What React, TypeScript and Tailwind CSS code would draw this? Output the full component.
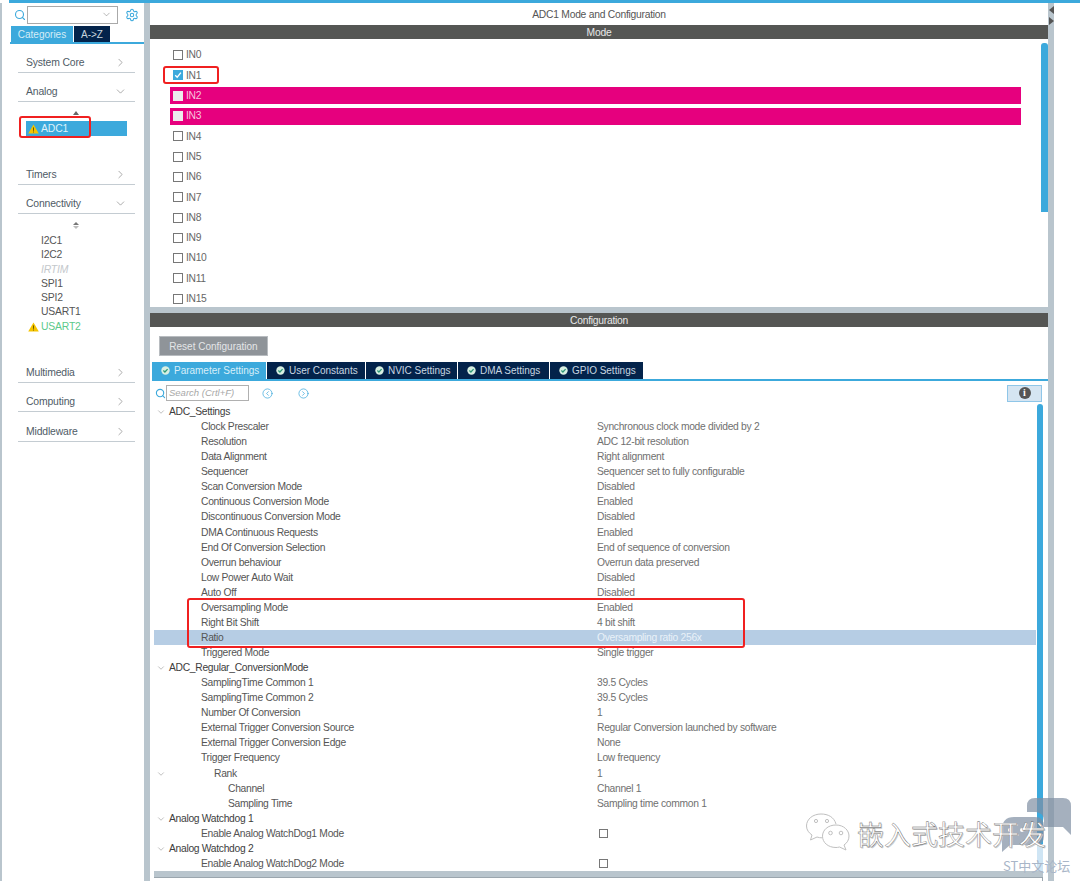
import { ChevronDown, ChevronRight, CircleChevronLeft, CircleChevronRight, Search, Settings } from "lucide-react";

const inputs = ["IN0", "IN1", "IN2", "IN3", "IN4", "IN5", "IN6", "IN7", "IN8", "IN9", "IN10", "IN11", "IN15"];

const tabs = [
  { label: "Parameter Settings", width: "w-[115px]", active: true },
  { label: "User Constants", width: "w-[99px]", active: false },
  { label: "NVIC Settings", width: "w-[92px]", active: false },
  { label: "DMA Settings", width: "w-[92px]", active: false },
  { label: "GPIO Settings", width: "w-[94px]", active: false },
];

type Row = { label: string; value?: string; level?: 0 | 1 | 2 | 3; arrow?: boolean; check?: boolean; selected?: boolean };

const rows: Row[] = [
  { label: "ADC_Settings", level: 0, arrow: true },
  { label: "Clock Prescaler", value: "Synchronous clock mode divided by 2" },
  { label: "Resolution", value: "ADC 12-bit resolution" },
  { label: "Data Alignment", value: "Right alignment" },
  { label: "Sequencer", value: "Sequencer set to fully configurable" },
  { label: "Scan Conversion Mode", value: "Disabled" },
  { label: "Continuous Conversion Mode", value: "Enabled" },
  { label: "Discontinuous Conversion Mode", value: "Disabled" },
  { label: "DMA Continuous Requests", value: "Enabled" },
  { label: "End Of Conversion Selection", value: "End of sequence of conversion" },
  { label: "Overrun behaviour", value: "Overrun data preserved" },
  { label: "Low Power Auto Wait", value: "Disabled" },
  { label: "Auto Off", value: "Disabled" },
  { label: "Oversampling Mode", value: "Enabled" },
  { label: "Right Bit Shift", value: "4 bit shift" },
  { label: "Ratio", value: "Oversampling ratio 256x", selected: true },
  { label: "Triggered Mode", value: "Single trigger" },
  { label: "ADC_Regular_ConversionMode", level: 0, arrow: true },
  { label: "SamplingTime Common 1", value: "39.5 Cycles" },
  { label: "SamplingTime Common 2", value: "39.5 Cycles" },
  { label: "Number Of Conversion", value: "1" },
  { label: "External Trigger Conversion Source", value: "Regular Conversion launched by software" },
  { label: "External Trigger Conversion Edge", value: "None" },
  { label: "Trigger Frequency", value: "Low frequency" },
  { label: "Rank", value: "1", level: 2, arrow: true },
  { label: "Channel", value: "Channel 1", level: 3 },
  { label: "Sampling Time", value: "Sampling time common 1", level: 3 },
  { label: "Analog Watchdog 1", level: 0, arrow: true },
  { label: "Enable Analog WatchDog1 Mode", check: true },
  { label: "Analog Watchdog 2", level: 0, arrow: true },
  { label: "Enable Analog WatchDog2 Mode", check: true },
];

function WarnIcon() {
  return (
    <svg width="11" height="10" viewBox="0 0 11 10" className="shrink-0">
      <path d="M5.5 0.5 L10.8 9.6 H0.2 Z" fill="#f5c400" />
      <rect x="5" y="3.4" width="1" height="3.4" fill="#6b5a00" />
      <rect x="5" y="7.5" width="1" height="1" fill="#6b5a00" />
    </svg>
  );
}

function TabCheck() {
  return (
    <svg width="9" height="9" viewBox="0 0 9 9" className="shrink-0">
      <circle cx="4.5" cy="4.5" r="4.2" fill="#d8efe2" />
      <path d="M2.4 4.6 L3.9 6 L6.6 3.1" stroke="#2f9a78" strokeWidth="1.3" fill="none" />
    </svg>
  );
}

function Category({ label, open, gap = "mt-[9px]" }: { label: string; open?: boolean; gap?: string }) {
  return (
    <div className={`ml-[16px] mr-[9px] flex h-[20px] shrink-0 items-center justify-between border-b border-[#c4ccd2] px-[8px] text-[10.4px] tracking-[-0.15px] text-[#4f5b66] ${gap}`}>
      <span>{label}</span>
      {open ? (
        <ChevronDown size={13} strokeWidth={1} className="text-[#666]" />
      ) : (
        <ChevronRight size={13} strokeWidth={1} className="text-[#666]" />
      )}
    </div>
  );
}

function Sidebar() {
  return (
    <aside className="flex w-[142px] shrink-0 flex-col bg-white">
      <div className="flex h-[23px] items-center">
        <Search size={12} strokeWidth={2.2} className="ml-[12px] text-[#3ca9dc]" />
        <div className="ml-px flex h-[18px] w-[91px] items-center justify-end border border-[#a9a9a9] pr-[5px]">
          <ChevronDown size={11} strokeWidth={1} className="text-[#666]" />
        </div>
        <Settings size={14} strokeWidth={1.8} className="ml-[7px] text-[#3ca9dc]" />
      </div>
      <div className="ml-[8px] flex h-[18px] w-[134px] gap-px border-b-2 border-[#3ca9dc] pl-px">
        <div className="flex w-[62px] items-center justify-center bg-[#3ca9dc] text-[10px] text-[#d4ecf7]">Categories</div>
        <div className="flex w-[36px] items-center justify-center bg-[#03234b] text-[10px] text-[#c8d4de]">A-&gt;Z</div>
      </div>
      <Category label="System Core" />
      <Category label="Analog" open />
      <div className="flex h-[54px] flex-col">
        <div className="ml-[71px] mt-[9px] h-0 w-0 border-x-[3px] border-b-[4px] border-x-transparent border-b-[#666]" />
        <div className="ml-[24px] mt-[6px] flex h-[15px] w-[101px] items-center gap-[2px] bg-[#3ca9dc] pl-[2px] text-[10.4px] tracking-[-0.15px] text-[#dff1fa]">
          <WarnIcon />
          <span>ADC1</span>
        </div>
      </div>
      <Category label="Timers" />
      <Category label="Connectivity" open />
      <div className="flex h-[139px] flex-col text-[10.4px] tracking-[-0.2px] text-[#555]">
        <div className="ml-[71px] mt-[8px] h-0 w-0 border-x-[3px] border-b-[3px] border-x-transparent border-b-[#777]" />
        <div className="ml-[71px] mt-px h-0 w-0 border-x-[3px] border-t-[3px] border-x-transparent border-t-[#bbb]" />
        <div className="ml-[39px] mt-[5px] flex flex-col">
          <span className="h-[14.3px] leading-[14px]">I2C1</span>
          <span className="h-[14.3px] leading-[14px]">I2C2</span>
          <span className="h-[14.3px] italic leading-[14px] text-[#c4c8cc]">IRTIM</span>
          <span className="h-[14.3px] leading-[14px]">SPI1</span>
          <span className="h-[14.3px] leading-[14px]">SPI2</span>
          <span className="h-[14.3px] leading-[14px]">USART1</span>
        </div>
        <div className="ml-[26px] flex h-[14.3px] items-center gap-[2px] text-[#5cc98a]">
          <WarnIcon />
          <span>USART2</span>
        </div>
      </div>
      <Category label="Multimedia" gap="mt-[10px]" />
      <Category label="Computing" />
      <Category label="Middleware" gap="mt-[10px]" />
    </aside>
  );
}

function ModePanel() {
  return (
    <section className="flex h-[304px] shrink-0 flex-col bg-white">
      <div className="flex h-[22px] items-center justify-center pt-px text-[10.3px] tracking-[-0.25px] text-[#555]">ADC1 Mode and Configuration</div>
      <div className="flex h-[14px] items-center justify-center bg-[#555654] pt-px text-[10.3px] tracking-[-0.25px] text-[#e8e8e8]">Mode</div>
      <div className="flex min-h-0 flex-1">
        <div className="flex-1 pt-[6px]">
          {inputs.map((name) => {
            const pink = name === "IN2" || name === "IN3";
            const checked = name === "IN1";
            return (
              <div key={name} className="flex h-[20.3px] items-center">
                <div
                  className={`ml-[20px] flex h-[17px] w-[851px] items-center gap-[3px] pl-[3px] text-[10.3px] tracking-[-0.3px] ${
                    pink ? "bg-[#e6007e] text-[#f8c4de]" : "text-[#666]"
                  }`}
                >
                  <span
                    className={`flex h-[10px] w-[10px] shrink-0 items-center justify-center ${
                      checked
                        ? "bg-[#3ca9dc]"
                        : pink
                          ? "bg-[#ececec]"
                          : "border border-[#777] bg-white"
                    }`}
                  >
                    {checked && (
                      <svg width="8" height="8" viewBox="0 0 8 8">
                        <path d="M1.2 4.2 L3.2 6.2 L6.9 1.6" stroke="#fff" strokeWidth="1.3" fill="none" />
                      </svg>
                    )}
                  </span>
                  {name}
                </div>
              </div>
            );
          })}
        </div>
        <div className="mt-[4px] h-[169px] w-[7px] rounded-t-[3px] bg-[#3ca9dc]" />
      </div>
    </section>
  );
}

function ParamRow({ row }: { row: Row }) {
  const level = row.level ?? 1;
  const indent = level === 0 ? "pl-[15px]" : level === 1 ? "pl-[47px]" : level === 2 ? "pl-[60px]" : "pl-[74px]";
  return (
    <div className={`relative flex h-[15.07px] items-center text-[10.3px] tracking-[-0.3px] ${row.selected ? "bg-[#b6cde4]" : ""}`}>
      {row.arrow && <ChevronDown size={10} strokeWidth={1} className="absolute left-[2px] top-[3px] text-[#666]" />}
      <div className={`w-[443px] shrink-0 truncate ${indent} ${level === 0 ? "text-[#3d3d3d]" : "text-[#555]"}`}>{row.label}</div>
      {row.check ? (
        <span className="ml-[2px] h-[9px] w-[9px] border border-[#777] bg-white" />
      ) : (
        <div className={row.selected ? "text-[#e9f1f8]" : "text-[#707070]"}>{row.value}</div>
      )}
    </div>
  );
}

function ConfigPanel() {
  return (
    <section className="flex min-h-0 flex-1 flex-col bg-white">
      <div className="flex h-[14px] shrink-0 items-center justify-center bg-[#555654] pt-px text-[10.3px] tracking-[-0.25px] text-[#e8e8e8]">Configuration</div>
      <div className="ml-[9px] mt-[9px] flex h-[20px] w-[109px] shrink-0 items-center justify-center border border-[#b8bcc0] bg-[#8f9499] text-[10px] text-[#e4e6e8]">
        Reset Configuration
      </div>
      <div className="ml-[2px] mt-[6px] flex h-[19px] shrink-0 border-b-2 border-[#3ca9dc]">
        {tabs.map((tab) => (
          <div
            key={tab.label}
            className={`flex h-[17px] items-center gap-[4px] border-r border-white pl-[9px] text-[10px] tracking-[-0.02px] ${tab.width} ${
              tab.active ? "bg-[#3ca9dc] text-[#d7eef9]" : "bg-[#03234b] text-[#c8d6e0]"
            }`}
          >
            <TabCheck />
            {tab.label}
          </div>
        ))}
      </div>
      <div className="mt-[4px] flex h-[16px] shrink-0 items-center pl-[5px] pr-[6px]">
        <Search size={11} strokeWidth={2.4} className="text-[#3ca9dc]" />
        <div className="flex h-[16px] w-[83px] items-center border border-[#b0b0b0] pl-[2px] text-[9.5px] italic text-[#a8a8a8]">Search (Crtl+F)</div>
        <CircleChevronLeft size={11} strokeWidth={1.6} className="ml-[13px] text-[#3ca9dc]" />
        <CircleChevronRight size={11} strokeWidth={1.6} className="ml-[25px] text-[#3ca9dc]" />
        <div className="ml-auto flex h-[17px] w-[35px] items-center justify-center border border-[#8fc6e8] bg-[#d5e5f2]">
          <span className="flex h-[12px] w-[12px] items-center justify-center rounded-full bg-[#555] font-['Liberation_Serif',serif] text-[10px] font-bold leading-none text-white">i</span>
        </div>
      </div>
      <div className="flex min-h-0 flex-1 pl-[4px] pt-[2.5px]">
        <div className="w-[882px] shrink-0 pt-[0.7px]">
          {rows.map((row) => (
            <ParamRow key={row.label} row={row} />
          ))}
        </div>
        <div className="ml-px flex w-[6px] flex-col">
          <div className="h-[441px] rounded-t-[3px] bg-[#3ca9dc]" />
          <div className="h-[27px] bg-[#cfe5f4]" />
        </div>
      </div>
      <div className="ml-[4px] mt-auto h-[7px] w-[889px] shrink-0 border-b border-[#9ba6ae] bg-[#b9c5cd]" />
      <div className="ml-[4px] h-[3px] w-[889px] shrink-0 border-r border-[#9ba6ae]" />
    </section>
  );
}

function WeChatLogo() {
  return (
    <svg width="46" height="40" viewBox="0 0 46 40" fill="none" stroke="#c0c0c0" strokeWidth="1">
      <path d="M31 12 C29 5 23 2 16 2 C8 2 1.5 7 1.5 14 C1.5 18 4 21 7 23 L5.5 28 L12 25 C14 25.6 15 25.8 17 25.8" fill="#fff" />
      <path d="M31 13 C39 13 44 18.5 44 24 C44 28 42 31 39 33 L41 38 L34.5 35 C33 35.4 32 35.5 31 35.5 C23 35.5 17.5 30.5 17.5 24.2 C17.5 18 23 13 31 13 Z" fill="#fff" />
      <circle cx="11" cy="9" r="1.6" />
      <circle cx="22" cy="9" r="1.6" />
      <circle cx="25.5" cy="21" r="1.8" />
      <circle cx="36" cy="21" r="1.8" />
    </svg>
  );
}

function Watermark() {
  return (
    <div className="absolute left-[805px] top-[812px] flex h-[50px] items-start">
      <WeChatLogo />
      <span className="ml-[6px] mt-[4px] font-['Noto_Sans_CJK_SC',sans-serif] text-[27px] leading-[36px] text-white [-webkit-text-stroke:0.35px_#555] [text-shadow:1px_1px_0_#ccc]">
        嵌入式技术开发
      </span>
    </div>
  );
}

function StBadge() {
  return (
    <>
      <svg width="76" height="58" viewBox="0 0 76 58" className="absolute left-[1000px] top-[797px]">
        <path d="M27 15 V9 Q27 1 35 1 H63 Q71 1 71 9 V38 L63 30 H44 V24 Q44 16 36 15 Z" fill="#7f8ea3" fillOpacity="0.7" />
        <path d="M2 33 Q2 20 14 20 H35 Q44 20 44 29 V39 Q44 48 35 48 H10 L2 55 Z" fill="#7f8ea3" fillOpacity="0.7" />
        <circle cx="10" cy="33" r="2" fill="#fff" />
        <circle cx="22" cy="33" r="2" fill="#fff" />
      </svg>
      <span className="absolute left-[1003px] top-[858px] font-['Noto_Sans_CJK_SC',sans-serif] text-[13px] leading-[16px] text-[#a9b6c8]">
        ST中文论坛
      </span>
    </>
  );
}

export default function App() {
  return (
    <div className="relative flex h-[881px] w-[1080px] flex-col overflow-hidden bg-white font-['Liberation_Sans',Arial,sans-serif]">
      <div className="ml-[9px] h-[3px] shrink-0 bg-[#3ca9dc]" />
      <div className="flex min-h-0 flex-1">
        <div className="w-[2px] shrink-0 bg-[#b9c5cd]" />
        <Sidebar />
        <div className="w-[6px] shrink-0 bg-[#b9c5cd]" />
        <main className="flex w-[898px] shrink-0 flex-col">
          <ModePanel />
          <div className="h-[6px] shrink-0 bg-[#b9c5cd]" />
          <ConfigPanel />
        </main>
        <div className="relative w-[6px] shrink-0 bg-[#b9c5cd]">
          <div className="absolute left-[1px] top-[3px] h-0 w-0 border-y-[4px] border-r-[5px] border-y-transparent border-r-[#555]" />
          <div className="absolute left-[1px] top-[14px] h-0 w-0 border-y-[4px] border-l-[5px] border-y-transparent border-l-[#555]" />
        </div>
      </div>

      <div className="absolute left-[19px] top-[116px] h-[22px] w-[72px] rounded-[3px] border-[2.5px] border-[#f02020]" />
      <div className="absolute left-[163px] top-[66px] h-[18px] w-[56px] rounded-[3px] border-[2.5px] border-[#f02020]" />
      <div className="absolute left-[187px] top-[598px] h-[50px] w-[558px] rounded-[3px] border-[2.5px] border-[#f02020]" />

      <StBadge />
      <Watermark />
    </div>
  );
}
